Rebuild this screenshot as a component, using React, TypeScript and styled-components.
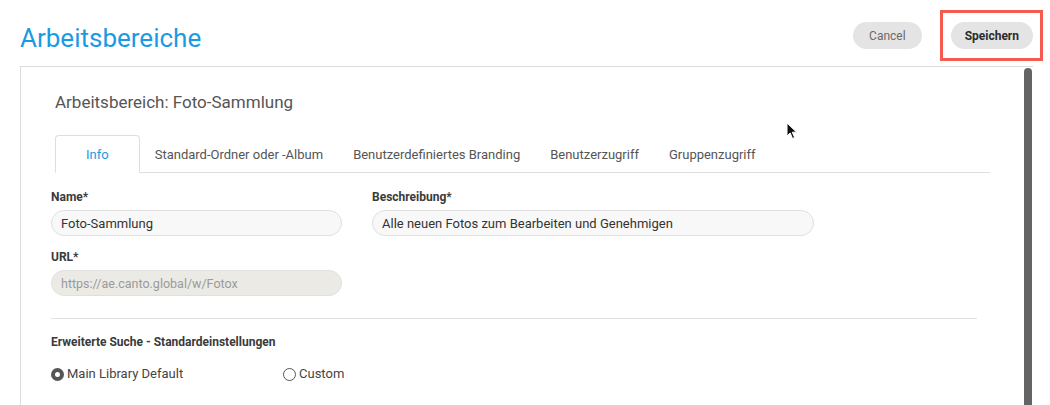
import React from 'react';
import styled, { createGlobalStyle } from 'styled-components';

const GlobalStyle = createGlobalStyle`
  html, body {
    margin: 0;
    padding: 0;
    background: #fff;
    overflow: hidden;
  }
  body {
    font-family: Roboto, 'Liberation Sans', Arial, sans-serif;
    color: #333;
  }
`;

const tabs = ['Info', 'Standard-Ordner oder -Album', 'Benutzerdefiniertes Branding', 'Benutzerzugriff', 'Gruppenzugriff'];

export default function App() {
  return (
    <Page>
      <GlobalStyle />
      <Header>
        <Title>Arbeitsbereiche</Title>
        <Actions>
          <PillButton>Cancel</PillButton>
          <Highlight>
            <PillButton primary>Speichern</PillButton>
          </Highlight>
        </Actions>
      </Header>
      <Panel>
        <Content>
          <PanelTitle>Arbeitsbereich: Foto-Sammlung</PanelTitle>
          <TabBar>
            {tabs.map((t, i) => (
              <Tab key={t} active={i === 0}>
                {t}
              </Tab>
            ))}
          </TabBar>
          <FormRow>
            <Field width={291}>
              <Label>Name*</Label>
              <Input defaultValue="Foto-Sammlung" />
            </Field>
            <Field width={442}>
              <Label>Beschreibung*</Label>
              <Input defaultValue="Alle neuen Fotos zum Bearbeiten und Genehmigen" />
            </Field>
          </FormRow>
          <FormRow spaced>
            <Field width={291}>
              <Label>URL*</Label>
              <Input disabled defaultValue="https://ae.canto.global/w/Fotox" />
            </Field>
          </FormRow>
          <Divider />
          <SectionLabel>Erweiterte Suche - Standardeinstellungen</SectionLabel>
          <RadioRow>
            <RadioOption width={232}>
              <RadioDot checked />
              Main Library Default
            </RadioOption>
            <RadioOption>
              <RadioDot />
              Custom
            </RadioOption>
          </RadioRow>
        </Content>
        <ScrollTrack>
          <ScrollThumb />
        </ScrollTrack>
        <Cursor width="12" height="18" viewBox="0 0 12 18">
          <path d="M1 1 L1 14 L4.2 11 L6.5 16.5 L8.6 15.6 L6.3 10.2 L10.6 10.2 Z" fill="#111" stroke="#fff" strokeWidth="1" />
        </Cursor>
      </Panel>
    </Page>
  );
}

const Page = styled.div`
  width: 1050px;
  height: 405px;
`;

const Header = styled.div`
  display: flex;
  justify-content: space-between;
  align-items: flex-start;
  height: 66px;
  padding: 0 7px 0 20px;
`;

const Title = styled.h1`
  margin: 24px 0 0;
  font-size: 26px;
  line-height: 28px;
  font-weight: 400;
  color: #1b9ae4;
`;

const Actions = styled.div`
  display: flex;
  align-items: center;
  gap: 18px;
  padding-top: 10px;
`;

const Highlight = styled.div`
  border: 3px solid #f65a4c;
  padding: 9px 7px 9px 8px;
  display: flex;
`;

const PillButton = styled.button<{ primary?: boolean }>`
  height: 27px;
  padding: 0 ${(p) => (p.primary ? '14px' : '16px')};
  border: none;
  border-radius: 14px;
  background: #e4e4e4;
  font-family: Roboto, 'Liberation Sans', Arial, sans-serif;
  font-size: 12px;
  font-weight: ${(p) => (p.primary ? 700 : 400)};
  color: ${(p) => (p.primary ? '#2b2b2b' : '#6a6a6a')};
  cursor: pointer;
`;

const Panel = styled.div`
  position: relative;
  display: flex;
  margin: 0 17px 0 20px;
  height: 350px;
  border: 1px solid #dcdcdc;
  border-right: none;
`;

const Content = styled.div`
  flex: 1;
  padding: 0 47px 0 30px;
`;

const PanelTitle = styled.div`
  margin: 25px 0 0 4px;
  font-size: 17px;
  line-height: 20px;
  color: #555;
`;

const TabBar = styled.div`
  display: flex;
  margin: 23px -13px 0 4px;
  border-bottom: 1px solid #dedede;
`;

const Tab = styled.div<{ active?: boolean }>`
  height: 36px;
  display: flex;
  align-items: center;
  padding: 0 ${(p) => (p.active ? '30px' : '14px')};
  margin-bottom: ${(p) => (p.active ? '-1px' : '0')};
  font-size: 13px;
  color: ${(p) => (p.active ? '#1b9ae4' : '#555')};
  background: ${(p) => (p.active ? '#fff' : 'transparent')};
  border: 1px solid ${(p) => (p.active ? '#dedede' : 'transparent')};
  border-bottom: ${(p) => (p.active ? '1px solid #fff' : 'none')};
  border-radius: 4px 4px 0 0;
`;

const FormRow = styled.div<{ spaced?: boolean }>`
  display: flex;
  gap: 30px;
  margin-top: ${(p) => (p.spaced ? '14px' : '17px')};
`;

const Field = styled.div<{ width: number }>`
  display: flex;
  flex-direction: column;
  gap: 6px;
  width: ${(p) => p.width}px;
`;

const Label = styled.label`
  font-size: 12px;
  line-height: 14px;
  font-weight: 700;
  color: #3a3a3a;
`;

const Input = styled.input`
  box-sizing: border-box;
  width: 100%;
  height: 26px;
  padding: 0 9px;
  border: 1px solid #e0e0e0;
  border-radius: 13px;
  background: #f8f8f8;
  font-family: Roboto, 'Liberation Sans', Arial, sans-serif;
  font-size: 13px;
  color: #333;
  outline: none;

  &:disabled {
    background: #ebeae5;
    color: #9a9a9a;
    font-size: 12.5px;
  }
`;

const Divider = styled.hr`
  margin: 22px 0 0;
  border: none;
  border-top: 1px solid #e2e2e2;
`;

const SectionLabel = styled.div`
  margin-top: 16px;
  font-size: 12px;
  line-height: 14px;
  font-weight: 700;
  color: #3a3a3a;
`;

const RadioRow = styled.div`
  display: flex;
  margin-top: 16px;
`;

const RadioOption = styled.label<{ width?: number }>`
  display: flex;
  align-items: center;
  gap: 3px;
  width: ${(p) => (p.width ? `${p.width}px` : 'auto')};
  font-size: 13px;
  line-height: 18px;
  color: #444;
`;

const RadioDot = styled.span<{ checked?: boolean }>`
  box-sizing: border-box;
  width: 13px;
  height: 13px;
  border-radius: 50%;
  background: #fff;
  border: ${(p) => (p.checked ? '4px solid #555' : '1px solid #555')};
`;

const ScrollTrack = styled.div`
  width: 9px;
  padding-top: 1px;
  display: flex;
  justify-content: flex-start;
`;

const ScrollThumb = styled.div`
  width: 8px;
  height: 100%;
  border-radius: 4px;
  background: #646464;
`;

const Cursor = styled.svg`
  position: absolute;
  left: 765px;
  top: 55px;
`;
